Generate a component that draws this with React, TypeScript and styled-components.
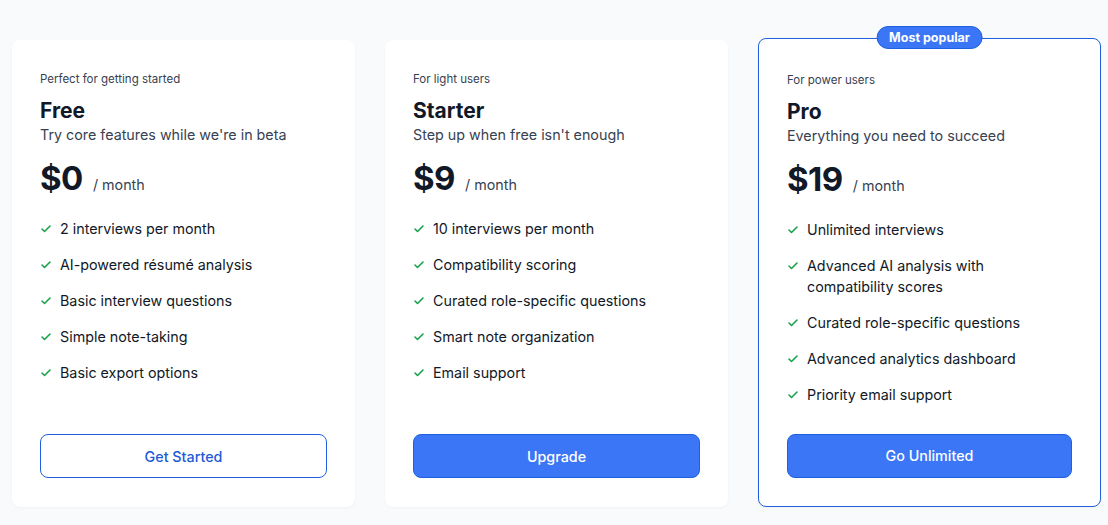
import React from "react";
import styled, { createGlobalStyle } from "styled-components";

const plans = [
  {
    tag: "Perfect for getting started",
    name: "Free",
    blurb: "Try core features while we're in beta",
    price: "$0",
    features: [
      "2 interviews per month",
      "AI-powered résumé analysis",
      "Basic interview questions",
      "Simple note-taking",
      "Basic export options",
    ],
    cta: "Get Started",
    solid: false,
    popular: false,
  },
  {
    tag: "For light users",
    name: "Starter",
    blurb: "Step up when free isn't enough",
    price: "$9",
    features: [
      "10 interviews per month",
      "Compatibility scoring",
      "Curated role-specific questions",
      "Smart note organization",
      "Email support",
    ],
    cta: "Upgrade",
    solid: true,
    popular: false,
  },
  {
    tag: "For power users",
    name: "Pro",
    blurb: "Everything you need to succeed",
    price: "$19",
    features: [
      "Unlimited interviews",
      "Advanced AI analysis with compatibility scores",
      "Curated role-specific questions",
      "Advanced analytics dashboard",
      "Priority email support",
    ],
    cta: "Go Unlimited",
    solid: true,
    popular: true,
  },
];

function Check() {
  return (
    <SCheck viewBox="0 0 24 24" fill="none" stroke="currentColor" strokeWidth={3.2} strokeLinecap="round" strokeLinejoin="round">
      <path d="M20 6 9 17l-5-5" />
    </SCheck>
  );
}

export default function App() {
  return (
    <>
      <GlobalStyle />
      <SPage>
        {plans.map((p) => (
          <SCard key={p.name} $popular={p.popular}>
            {p.popular && <SBadge>Most popular</SBadge>}
            <STag>{p.tag}</STag>
            <SName>{p.name}</SName>
            <SBlurb>{p.blurb}</SBlurb>
            <SPriceRow>
              <SPrice>{p.price}</SPrice>
              <SPer>/ month</SPer>
            </SPriceRow>
            <SList>
              {p.features.map((f) => (
                <SItem key={f}>
                  <Check />
                  <span>{f}</span>
                </SItem>
              ))}
            </SList>
            <SButton $solid={p.solid}>{p.cta}</SButton>
          </SCard>
        ))}
      </SPage>
    </>
  );
}

const GlobalStyle = createGlobalStyle`
  *, *::before, *::after { box-sizing: border-box; }
  body {
    margin: 0;
    background: #f9fafb;
    font-family: Inter, "Liberation Sans", sans-serif;
    color: #111827;
  }
`;

const SPage = styled.main`
  display: grid;
  grid-template-columns: repeat(3, 343px);
  column-gap: 30px;
  padding: 40px 0 18px 12px;
  min-height: 100vh;
  align-items: stretch;
`;

const SCard = styled.section<{ $popular: boolean }>`
  position: relative;
  display: flex;
  flex-direction: column;
  background: #fff;
  border-radius: 8px;
  padding: ${(p) => (p.$popular ? "32.5px 28px 28.5px" : "31px 28px 29px")};
  box-shadow: 0 1px 3px rgba(17, 24, 39, 0.04);
  border: ${(p) => (p.$popular ? "1.5px solid #1f60df" : "none")};
  margin-top: ${(p) => (p.$popular ? "-2px" : "0")};
`;

const SBadge = styled.span`
  position: absolute;
  top: -13px;
  left: 50%;
  transform: translateX(-50%);
  background: #3b76f6;
  border: 1.5px solid #1f60df;
  color: #fff;
  font-size: 12.5px;
  font-weight: 700;
  line-height: 21px;
  padding: 0 12px;
  border-radius: 999px;
  white-space: nowrap;
`;

const STag = styled.div`
  font-size: 11.5px;
  line-height: 17px;
  color: #374151;
`;

const SName = styled.h3`
  margin: 9px 0 0;
  font-size: 21px;
  line-height: 28px;
  font-weight: 700;
  color: #111827;
`;

const SBlurb = styled.p`
  margin: 0;
  font-size: 14.3px;
  line-height: 20px;
  color: #374151;
`;

const SPriceRow = styled.div`
  display: flex;
  align-items: baseline;
  gap: 10px;
  margin-top: 13px;
  height: 40px;
`;

const SPrice = styled.span`
  font-size: 33px;
  line-height: 40px;
  font-weight: 700;
  color: #111827;
  letter-spacing: -0.5px;
`;

const SPer = styled.span`
  font-size: 14.3px;
  color: #374151;
`;

const SList = styled.ul`
  list-style: none;
  margin: 20px 0 0;
  padding: 0;
  display: flex;
  flex-direction: column;
  gap: 15px;
`;

const SItem = styled.li`
  display: flex;
  align-items: flex-start;
  gap: 8px;
  font-size: 14.3px;
  line-height: 21px;
  color: #111827;
`;

const SCheck = styled.svg`
  width: 12px;
  height: 12px;
  flex: none;
  margin-top: 5px;
  color: #16a34a;
`;

const SButton = styled.button<{ $solid: boolean }>`
  margin-top: auto;
  height: 44px;
  width: 100%;
  border-radius: 8px;
  font-family: inherit;
  font-size: 14.3px;
  font-weight: 500;
  cursor: pointer;
  background: ${(p) => (p.$solid ? "#3b76f6" : "#fff")};
  color: ${(p) => (p.$solid ? "#fff" : "#1d5bd8")};
  border: 1.5px solid #1f60df;
`;
